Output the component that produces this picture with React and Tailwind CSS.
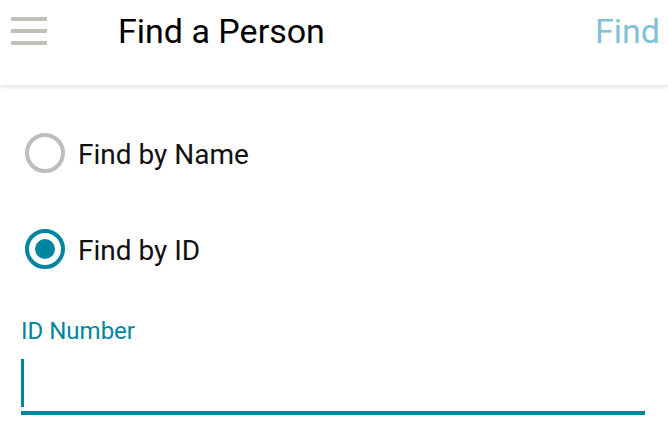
import React from 'react';

export default function App() {
    return (
        <div className="w-[668px] h-[435px] bg-white overflow-hidden" style={{ fontFamily: 'Roboto, "Noto Sans", sans-serif' }}>
            {/* Top bar */}
            <div className="h-[85px] flex items-start shadow-[0_2px_4px_rgba(0,0,0,0.12)] relative z-10 bg-white">
                <button className="ml-[11px] mt-[17px] w-[36px] flex flex-col gap-[8px]">
                    <span className="block h-[4px] bg-[#c2c1b9]" />
                    <span className="block h-[4px] bg-[#c2c1b9]" />
                    <span className="block h-[4px] bg-[#c2c1b9]" />
                </button>
                <h1 className="ml-[71px] mt-[9px] text-[34px] leading-[44px] text-black">Find a Person</h1>
                <span className="ml-auto mr-[8px] mt-[9px] text-[34px] leading-[44px] text-[#80c3d5]">Find</span>
            </div>

            {/* Form */}
            <div className="px-[21px]">
                <label className="flex items-center mt-[48px] h-[40px]">
                    <span className="ml-[4px] w-[40px] h-[40px] rounded-full border-[4px] border-[#bdbdbd]" />
                    <span className="ml-[13px] pt-[4px] text-[28px] leading-[40px] text-[#111]">Find by Name</span>
                </label>
                <label className="flex items-center mt-[56px] h-[40px]">
                    <span className="ml-[4px] w-[40px] h-[40px] rounded-full border-[4px] border-[#0085a1] flex items-center justify-center">
                        <span className="w-[20px] h-[20px] rounded-full bg-[#0085a1]" />
                    </span>
                    <span className="ml-[13px] pt-[4px] text-[28px] leading-[40px] text-[#111]">Find by ID</span>
                </label>
                <div className="mt-[48px] text-[24px] leading-[28px] text-[#0085a1]">ID Number</div>
                <div className="mt-[14px] w-[624px] h-[56px] border-b-[4px] border-[#0085a1] flex items-stretch">
                    <span className="w-[3px] mb-[4px] bg-[#0085a1]" />
                </div>
            </div>
        </div>
    );
}
